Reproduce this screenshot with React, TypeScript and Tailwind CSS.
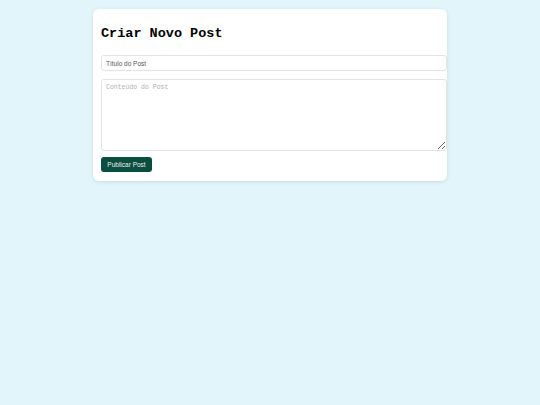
export default function App() {
    return (
        <div className="min-h-[405px] w-full bg-[#e1f5fb] pt-[9px]">
            <div className="mx-auto w-[354px] rounded-md bg-white px-[8px] pb-[9px] pt-[15px] shadow-[0_1px_4px_rgba(0,0,0,0.10)]">
                <h2 className="mb-[11px] font-['Liberation_Mono',monospace] text-[13.5px] font-bold leading-[20px] text-black">
                    Criar Novo Post
                </h2>
                <input
                    type="text"
                    placeholder="Título do Post"
                    className="mb-[8px] block h-[16px] w-[346px] rounded-[3px] border border-[#e3e3e3] px-[4px] font-['Liberation_Sans',sans-serif] text-[6.5px] text-[#333] placeholder:text-[#555] focus:outline-none"
                />
                <textarea
                    placeholder="Conteúdo do Post"
                    className="mb-[6px] block h-[72px] w-[346px] rounded-[3px] border border-[#e3e3e3] px-[4px] py-[3px] font-['Liberation_Mono',monospace] text-[6.5px] text-[#333] placeholder:text-[#b0b0b0] focus:outline-none"
                />
                <button className="block h-[15px] w-[51px] rounded-[3px] bg-[#0b4d3f] font-['Liberation_Sans',sans-serif] text-[6.5px] text-[#e8f0ee]">
                    Publicar Post
                </button>
            </div>
        </div>
    );
}
